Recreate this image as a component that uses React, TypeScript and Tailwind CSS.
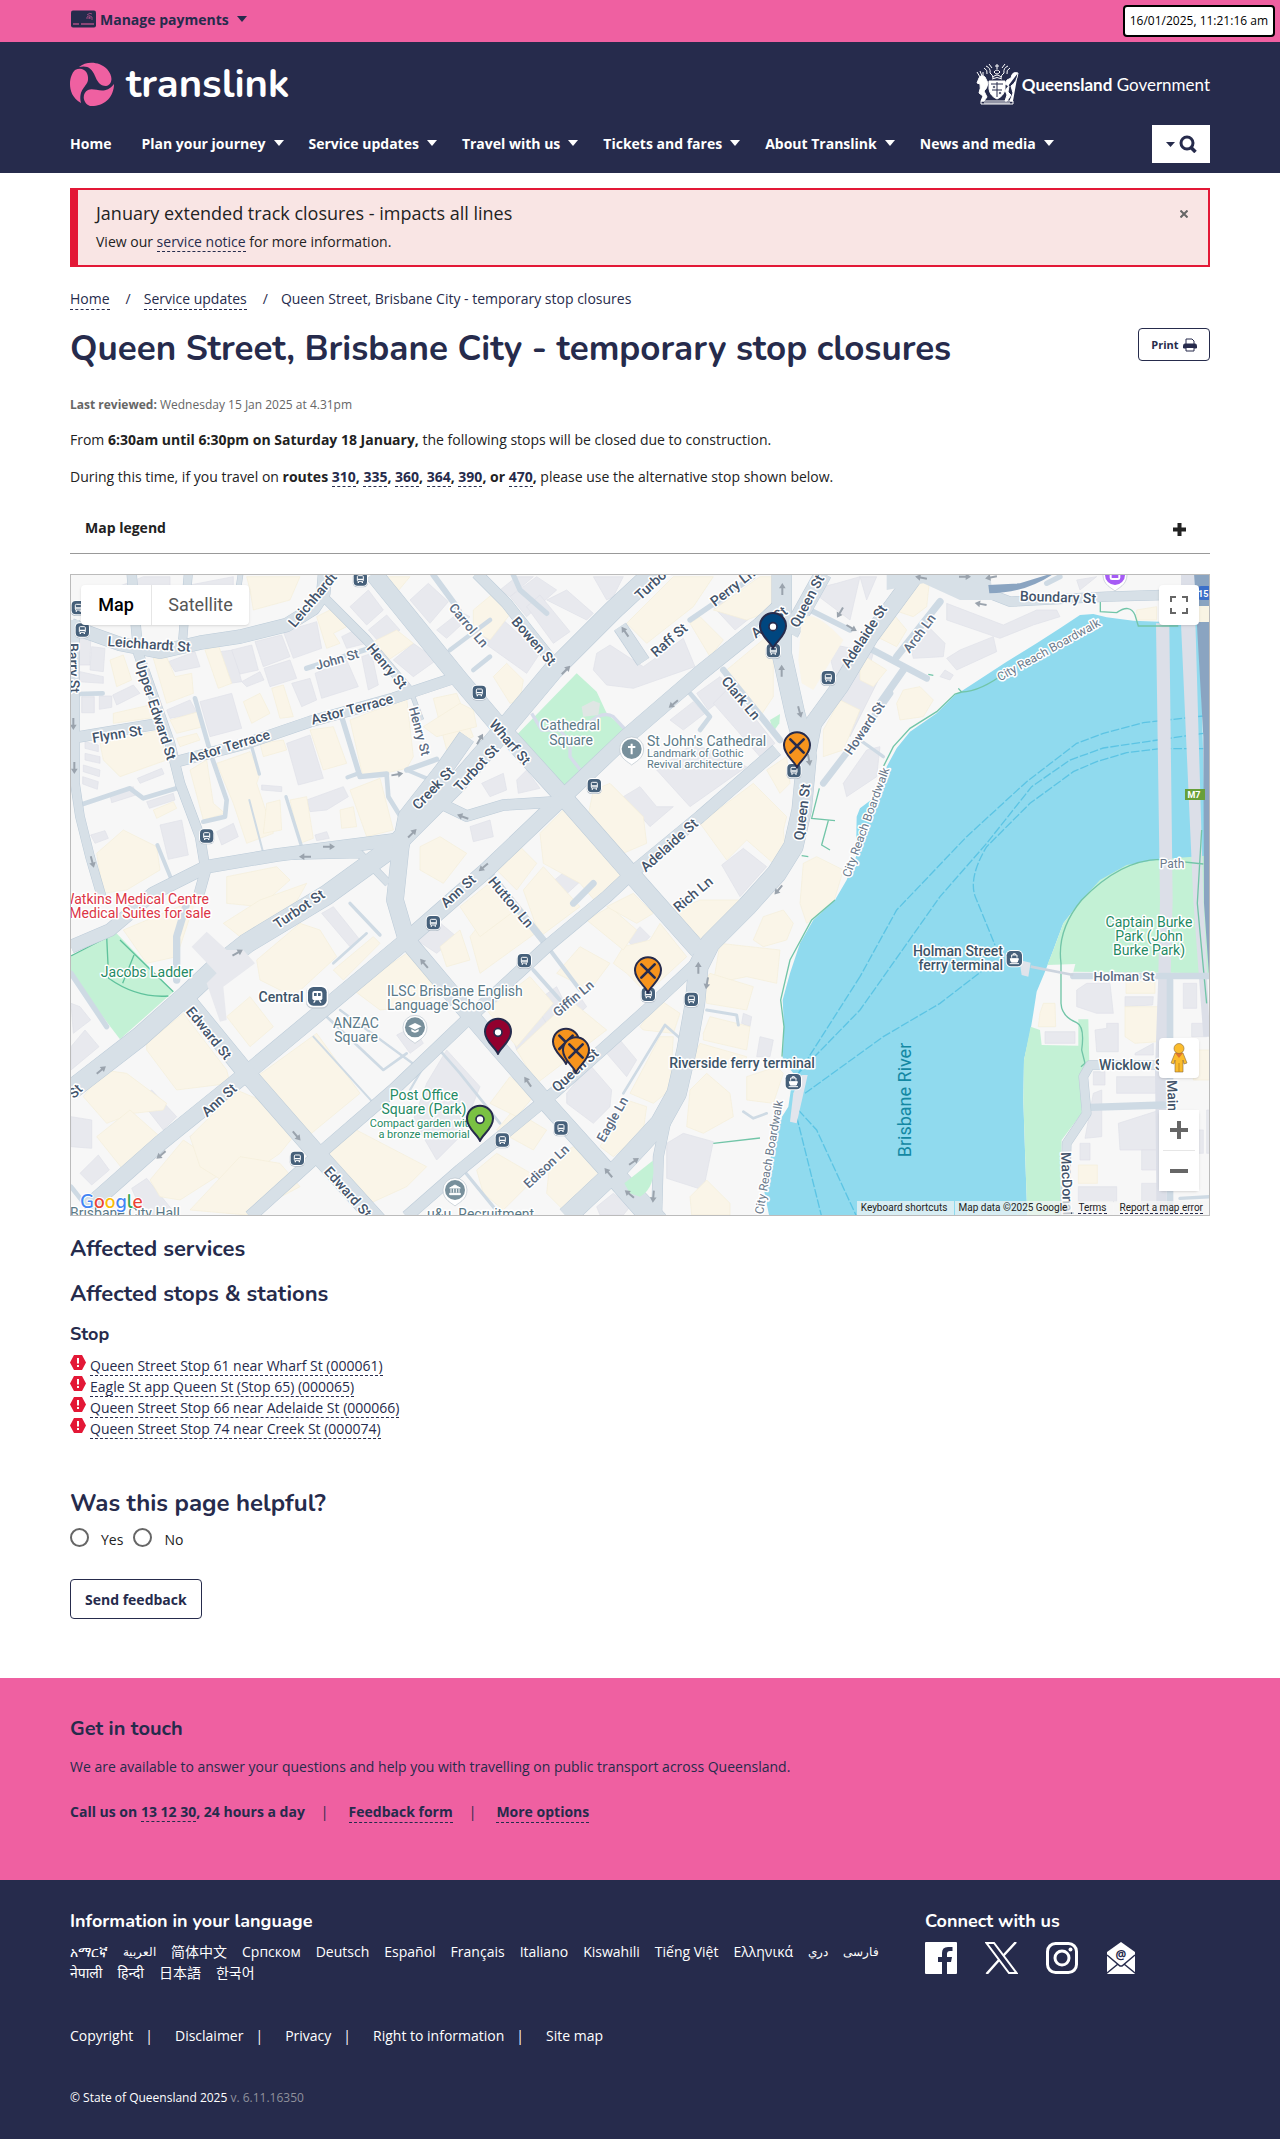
import React from "react";

const NAV = ["Plan your journey", "Service updates", "Travel with us", "Tickets and fares", "About Translink", "News and media"];
const ROUTES = ["310", "335", "360", "364", "390"];
const STOPS = [
  "Queen Street Stop 61 near Wharf St (000061)",
  "Eagle St app Queen St (Stop 65) (000065)",
  "Queen Street Stop 66 near Adelaide St (000066)",
  "Queen Street Stop 74 near Creek St (000074)",
];
const LANGS = ["አማርኛ", "العربية", "简体中文", "Српском", "Deutsch", "Español", "Français", "Italiano", "Kiswahili", "Tiếng Việt", "Ελληνικά", "دري", "فارسی", "नेपाली", "हिन्दी", "日本語", "한국어"];
const RTL = ["العربية", "دري", "فارسی"];
const LEGAL = ["Copyright", "Disclaimer", "Privacy", "Right to information", "Site map"];

const LINK = "border-b border-dashed border-[#262b4c] text-[#262b4c]";
const HEAD = "font-[Nunito,Lato,sans-serif] font-bold text-[#262b4c]";

function Caret({ className }: { className: string }) {
  return (
    <svg className={className} viewBox="0 0 10 6" preserveAspectRatio="none" aria-hidden="true">
      <path d="M0 0h10L5 6z" fill="currentColor" />
    </svg>
  );
}

/* ---------- Map drawing (geometry is on a grid three times finer than the labels) ---------- */

const GREY: string[] = [
  "150,60 250,20 330,20 330,60", "390,45 520,20 520,95 400,60", "38,200 92,210 90,285 38,285", "95,230 135,235 130,305 90,300", "60,305 130,320 130,340 55,335",
  "158,375 220,345 240,370 170,405", "65,380 103,380 103,428 65,428", "118,378 155,378 155,412 118,418", "325,275 405,245 420,290 345,305", "320,420 390,390 412,430 330,445",
  "420,395 515,370 545,475 450,500", "480,245 520,240 545,335 510,340", "515,240 575,225 595,300 540,312", "585,215 665,195 690,260 610,290", "670,185 770,155 785,235 700,265",
  "545,335 600,305 612,330 560,350", "612,295 690,270 710,325 630,350", "765,310 860,270 895,350 785,385", "695,340 750,325 770,390 725,410", "845,200 895,175 920,220 860,235",
  "905,260 935,250 955,345 925,360", "925,180 980,135 1020,180 965,225", "1000,270 1060,220 1130,270 1060,320", "870,110 925,60 970,120 920,165", "1050,90 1105,40 1165,95 1110,160",
  "1130,180 1200,125 1230,140 1160,205", "680,520 750,495 790,625 715,645", "740,690 850,650 865,680 800,720 750,725", "765,795 800,785 808,805 770,812", "605,645 665,650 665,665 605,660",
  "75,515 115,525 115,545 75,535", "75,550 120,560 120,580 75,570", "70,585 120,600 118,620 70,605", "68,620 115,635 112,658 68,642", "232,625 305,595 312,612 240,640",
  "150,675 220,650 228,675 155,698", "260,695 340,670 345,690 268,715", "92,795 135,782 145,805 105,820", "300,765 365,750 385,855 325,868", "470,785 520,760 535,800 485,825",
  "1350,80 1430,20 1490,60 1400,140", "1400,110 1440,75 1530,185 1480,220", "1460,90 1520,60 1600,130 1580,150", "1320,60 1370,20 1420,20 1350,80", "1260,210 1330,150 1440,250 1400,310",
  "1600,20 1690,20 1660,80 1640,90", "1600,300 1610,250 1650,225 1750,290 1870,205 1905,290 1720,355 1640,345", "1960,110 2000,80 2075,140 2025,180", "1910,370 1980,320 2020,360 1945,420", "1830,450 1900,395 1935,430 1870,480",
  "1960,400 2010,350 2145,520 2100,560", "1790,600 1900,520 2060,590 1890,710", "1690,680 1740,650 1790,710 1840,710 1770,770", "1265,640 1330,610 1340,660 1290,680", "1370,630 1400,600 1440,655 1375,670",
  "1230,770 1290,750 1300,800 1240,815", "1460,950 1520,900 1560,935 1500,990", "1985,885 2050,835 2120,890 2040,980", "2250,60 2330,40 2400,20 2370,150", "2330,350 2400,200 2440,250 2390,420",
  "2300,220 2400,240 2460,320 2370,500", "2660,100 2830,165 2930,120 2990,120 3000,140 2920,165 2820,205 2660,150", "2550,220 2610,175 2655,220 2650,260 2560,265", "2660,265 2700,240 2800,200 2810,245 2690,300", "2640,320 2655,300 2680,315 2670,330",
  "2350,640 2420,540 2460,530 2450,620 2360,680", "2400,20 2450,20 2420,90", "3050,30 3110,20 3060,60",
  "785,1030 820,1010 900,1110 870,1130", "1070,1110 1130,1050 1190,1100 1130,1150", "33,1300 60,1310 92,1350 40,1390", "33,1430 75,1380 117,1430 33,1500",
  "33,1640 95,1650 95,1735 33,1730", "240,1590 275,1560 350,1640 310,1680", "60,1810 115,1755 148,1800 95,1845", "215,1855 260,1825 345,1930 250,1935", "390,1700 430,1670 500,1760 480,1800",
  "1010,1395 1060,1370 1090,1420 1050,1450", "1100,1540 1160,1440 1260,1550 1200,1700 1130,1770 1060,1650", "1360,1410 1440,1330 1470,1360 1370,1440", "1420,1300 1490,1250 1510,1290 1560,1280 1580,1310 1490,1390 1460,1360",
  "1520,1570 1590,1485 1655,1560 1650,1610 1600,1660 1520,1600", "1640,1450 1680,1410 1730,1470 1700,1520", "1700,1110 1740,1070 1770,1100 1730,1140", "1820,1825 1820,1720 1870,1690 1960,1715 1930,1860", "1610,1910 1660,1870 1710,1910 1690,1935 1620,1935",
  "2090,1460 2100,1400 2140,1410 2130,1460", "2050,1330 2075,1340 2070,1370 2045,1360", "3050,1260 3080,1240 3150,1240 3160,1330 3110,1330 3050,1310", "3195,1280 3280,1280 3278,1305 3195,1310", "2955,1385 3045,1385 3045,1420 2955,1420",
  "3105,1380 3140,1375 3140,1360 3175,1360 3175,1445 3110,1445", "3100,1505 3135,1505 3135,1545 3100,1545", "3170,1520 3290,1520 3290,1570 3170,1570", "3175,1660 3300,1620 3300,1740 3180,1740", "3100,1570 3125,1560 3125,1700 3075,1705",
  "3060,1720 3090,1720 3090,1770 3060,1770", "3245,1740 3290,1740 3290,1800 3245,1800", "3245,1840 3290,1840 3290,1935 3245,1935", "3055,1850 3170,1850 3170,1895 3055,1895", "3370,1240 3410,1240 3410,1315 3370,1315",
  "3395,1360 3440,1360 3440,1400 3395,1400", "3395,1680 3430,1680 3430,1750 3395,1750", "3440,1620 3460,1620 3460,1750 3440,1750", "3225,1450 3280,1420 3280,1455 3225,1455",
];

const CREAM: string[] = [
  "560,20 720,20 690,90 580,120 570,60", "150,270 190,255 215,330 170,350", "280,265 315,250 345,320 395,310 400,370 320,400", "435,240 475,225 515,340 475,355", "550,395 600,370 630,430 575,460",
  "635,355 670,345 700,440 660,445", "770,140 820,115 860,170 820,190 840,220 800,235", "160,430 270,405 300,440 160,460", "120,520 300,480 320,570 180,620 130,570", "330,450 415,425 430,470 350,490",
  "350,505 410,490 420,510 360,530", "870,450 1040,385 1060,560 1040,595 910,625", "1120,385 1190,370 1240,500 1160,540", "600,520 670,510 680,540 610,560", "750,480 820,470 860,580 790,600",
  "390,600 440,570 460,700 495,730 430,750", "470,580 570,545 600,610 590,640 640,790 560,820 520,700", "620,700 660,690 665,780 610,790", "690,690 740,680 760,805 720,820", "870,660 960,625 1000,780 920,800",
  "840,720 880,710 890,770 845,775", "110,850 190,780 290,830 300,900 200,960 130,970", "280,720 340,695 350,715 290,745", "500,920 650,890 690,930 600,1010 500,1000", "1080,830 1140,800 1220,850 1150,940 1080,900",
  "960,20 1050,20 1000,80", "930,220 1010,180 1060,220 970,280", "1240,120 1300,70 1360,120 1290,210 1240,180", "1300,320 1340,280 1390,330 1380,390 1350,400", "1090,470 1130,500 1250,470 1240,420 1200,400",
  "1700,160 1840,20 1960,20 1900,110 1760,220", "1890,160 1920,140 1990,210 1950,260", "1960,120 2100,20 2140,20 2140,120 2060,150", "2000,300 2120,200 2140,250 2140,380 2100,440 2060,370",
  "2290,480 2340,390 2400,420 2350,540 2290,560", "2120,600 2180,560 2190,640 2160,670", "1920,760 2080,640 2180,740 2170,780 2180,890 2140,880 2060,810 2000,870", "2230,880 2270,860 2350,900 2320,1000 2240,1060 2220,1000",
  "1580,760 1600,660 1650,640 1750,740 1760,820 1690,850 1640,800", "1440,790 1510,720 1720,930 1620,1010 1560,940 1450,880", "1300,890 1370,820 1430,880 1370,960", "1390,960 1450,890 1560,1010 1440,1100",
  "2500,80 2540,20 2610,20 2600,110 2560,140 2500,120", "2450,200 2490,120 2540,180 2510,230", "2400,250 2480,300 2440,350 2400,330", "2510,400 2530,360 2580,350 2620,390 2590,440 2520,450",
  "3230,120 3290,110 3290,150 3230,150", "3380,110 3450,110 3450,155 3380,155", "190,1080 380,1000 400,1010 350,1160 260,1180", "490,1060 600,990 740,940 690,1030 600,1100 540,1100", "590,1170 720,1060 780,1080 830,1160 700,1280 600,1230",
  "820,1200 940,1100 960,1120 850,1230", "500,1340 570,1280 640,1370 570,1430", "590,1520 770,1390 900,1570 730,1710", "260,1420 370,1330 500,1500 510,1540 350,1560 260,1440", "70,1580 130,1500 200,1510 320,1600 310,1620 220,1630 140,1660",
  "110,1700 210,1620 300,1700 190,1800", "270,1830 370,1710 430,1750 470,1820 360,1890 300,1880", "390,1700 530,1560 600,1590 700,1700 660,1750 560,1820 500,1840 420,1790", "390,1920 540,1760 660,1780 720,1850 560,1935", "800,1750 870,1670 1100,1790 1040,1850 930,1900 870,1850",
  "880,1260 1040,1150 1140,1270 1060,1310 960,1320", "1140,1130 1200,1080 1230,1170 1160,1190", "1230,1100 1340,960 1440,1080 1260,1210", "1200,1010 1300,930 1380,1010 1260,1100", "1280,1320 1410,1220 1480,1300 1370,1430",
  "1370,1440 1530,1290 1640,1380 1430,1540", "1490,1210 1560,1130 1650,1180 1590,1260", "1660,1180 1690,1130 1770,1110 1800,1060 1880,1160 1760,1270 1700,1210", "1580,1050 1650,1010 1730,1080 1690,1140", "1640,1010 1720,970 1780,1030 1730,1060",
  "1830,1030 1920,990 2070,990 1930,1110", "1710,1570 1800,1400 1840,1400 1830,1560 1780,1600", "1740,1370 1800,1290 1860,1330 1840,1390 1750,1380", "1620,1730 1700,1590 1760,1610 1750,1680 1660,1760", "1470,1770 1540,1730 1620,1810 1510,1920 1460,1870",
  "1310,1680 1360,1620 1460,1680 1420,1740", "1290,1600 1350,1520 1420,1580 1370,1640", "1250,1800 1310,1750 1430,1820 1330,1920 1270,1870", "1960,1240 1980,1120 2160,1140 2150,1240 2060,1220", "1930,1240 1950,1210 2080,1250 2060,1320 1940,1300",
  "1930,1390 1950,1340 2070,1370 2060,1440 1930,1410", "1880,1500 1920,1420 2060,1460 2050,1490", "2080,1110 2110,1040 2170,1020 2200,1060 2180,1110 2110,1130", "1880,1670 1890,1560 1940,1510 2010,1570 2020,1640 1930,1690", "2060,1520 2150,1490 2170,1510 2140,1600 2060,1590",
  "1895,1935 1890,1880 1940,1830 2010,1900 2010,1935", "2940,1330 2950,1300 2985,1300 2987,1370 2935,1370", "3195,1310 3295,1310 3295,1415 3225,1420 3195,1400", "3198,1235 3285,1235 3285,1270 3198,1270", "3055,1785 3112,1785 3112,1840 3055,1840", "3400,1440 3450,1440 3450,1530 3400,1530",
];

const LANES: [string, number][] = [
  ["50,372 128,370", 14], ["60,705 210,655 250,685 350,655", 14], ["405,385 455,560 500,690 495,740 430,755", 14], ["845,440 900,620 980,612", 16],
  ["980,615 985,680 1022,740", 14], ["1040,600 1130,568", 16], ["1040,600 1100,625", 12], ["575,530 598,612", 10], ["568,690 610,850", 6], ["678,680 725,830", 10], ["292,825 335,930", 12],
  ["740,295 920,238", 16], ["862,622 890,612", 12], ["1120,15 1190,110 1200,130", 18], ["1170,240 1290,150", 14], ["1360,15 1380,60 1460,130", 16], ["1240,300 1290,260", 14],
  ["1890,150 2080,20", 16], ["1890,370 1950,440 1920,480", 14], ["1990,300 2160,510", 20], ["2290,640 2420,470 2490,370", 20], ["2640,95 2510,260", 22],
  ["2410,225 2600,325", 20], ["2530,300 2460,400", 22], ["2250,120 2370,180", 16], ["2400,510 2470,560", 10], ["380,1000 350,1100 350,1230", 22], ["33,1210 140,1370", 16], ["33,1850 100,1935", 14],
  ["870,1000 960,1095", 10], ["820,1180 920,1090", 8], ["760,1400 950,1610", 6], ["800,1340 970,1500 1040,1450", 8], ["840,1320 1085,1500 1050,1560", 7], ["1130,1430 1200,1510 1320,1660", 8],
  ["1280,900 1465,1130", 22], ["1470,1140 1560,1260", 12], ["1420,1200 1500,1290", 12], ["1690,1570 1815,1365 1860,1405", 8], ["1210,1800 1320,1935", 10], ["1940,1320 2030,1335 2035,1365", 9],
  ["2050,1625 2080,1645 2120,1630", 8], ["3040,1218 3450,1218", 20], ["3330,1230 3330,1935", 20], ["3090,1612 3310,1605", 22], ["2960,40 3000,20", 16], ["3360,1885 3450,1880", 10], ["1540,1000 1600,940", 20],
];

const STREETS: [string, number][] = [
  ["33,165 90,190 180,222 300,245 420,218 540,200 680,165 760,115 790,70 795,10", 40],
  ["215,10 225,140 235,250 330,520 360,640 420,800 435,890", 28], ["385,10 368,210", 24], ["542,10 530,90", 14],
  ["50,502 290,462", 32], ["45,150 45,400 45,640 60,740 90,860 125,980", 26], ["350,575 560,520 750,455 1000,385 1180,325", 32],
  ["790,80 920,210 1055,370", 26], ["1055,370 1085,450", 12], ["33,1130 150,1080 280,970 440,890 650,855 1000,810", 38], ["440,890 415,980", 30], ["650,858 900,852 985,940", 22],
  ["940,10 1200,330 1310,460 1505,675 1720,920 1915,1140", 52], ["33,1560 240,1400 380,1275 460,1200 560,1120 800,975 1000,830 1200,630 1300,515 1480,300 1660,120 1800,-10", 58],
  ["1220,500 1150,600 1040,740 1022,830 1005,990 1040,1110 1200,1300 1320,1440 1460,1600 1640,1800 1780,1960", 50],
  ["80,1915 300,1720 560,1510 800,1310 1040,1110 1280,900 1500,690 1700,500 1920,310 2100,165 2170,100", 46],
  ["2165,10 2165,250 2205,430 2240,560 2225,720 2200,830 2150,910 2060,1010 1950,1120 1915,1190 1905,1300 1880,1440 1850,1570 1800,1660 1680,1790 1520,1940", 58],
  ["2190,190 2290,10", 50], ["2570,10 2430,200 2340,350 2260,460 2240,560", 50], ["2150,540 1920,740 1720,905 1640,980 1460,1130 1220,1350 1000,1560 780,1750 570,1940", 36],
  ["380,1290 560,1510 770,1750 960,1960", 52], ["1910,1180 1760,1320 1480,1570 1200,1800 1040,1940", 34], ["1820,1640 1795,1760 1790,1940", 30], ["1660,1800 1800,1950", 46],
  ["1680,170 1750,275", 40], ["1250,10 1340,100 1490,290", 32], ["1100,680 1220,738 1330,705 1500,695", 32], ["2700,30 2760,60 2850,95 3140,80 3310,75", 28],
  ["3310,1485 3090,1485 3070,1520 3080,1630 3020,1720 3015,1935", 26],
];

const BUS: [number, number][] = [[901, 27], [55, 113], [67, 180], [440, 798], [1258, 367], [1603, 647], [2305, 323], [2140, 242], [2202, 602], [1120, 1058], [712, 1765], [1393, 1172], [1765, 1273], [1894, 1288], [1503, 1674], [1327, 1710]];
const ARROWS: [number, number, number][] = [[40, 462, 90], [43, 594, 90], [97, 876, 75], [735, 860, 180], [807, 830, 0], [1012, 613, -10], [1057, 790, -45], [1260, 507, -60], [1208, 740, 200], [1518, 300, -45], [1695, 185, 235], [1840, 402, 140], [2167, 57, -90], [2165, 302, -90], [2219, 426, 75], [2247, 570, 80], [2155, 960, 130], [2340, 128, 120], [2375, 174, 30], [2583, 23, 190], [2715, 20, 0], [2793, 22, 170], [2762, 102, 190], [1270, 892, 140], [533, 1148, -30], [124, 1500, -40], [303, 1755, 140], [710, 1698, 50], [1092, 1180, 230], [1403, 1535, 235], [1915, 1193, -90], [1941, 1240, 100], [1722, 1774, -35], [1645, 1808, 230], [1708, 1872, 220], [1780, 1880, 95]];

type Kind = "road" | "lane" | "path" | "poi" | "park" | "tiny" | "parkTiny" | "red" | "stop" | "river";
const STYLE: Record<Kind, string> = {
  road: "fill-[#43546b] text-[14px] font-medium stroke-white stroke-[3px]",
  lane: "fill-[#5a6b82] text-[13px] font-medium stroke-white stroke-[3px]",
  path: "fill-[#6b7a8c] text-[12px] stroke-white stroke-[3px]",
  poi: "fill-[#5b7a88] text-[14px] stroke-white stroke-[3px]",
  park: "fill-[#1f8a64] text-[14px] stroke-white stroke-[3px]",
  tiny: "fill-[#5b7a88] text-[11px] stroke-white stroke-[3px]",
  parkTiny: "fill-[#1f8a64] text-[11px] stroke-white stroke-[3px]",
  red: "fill-[#dc3545] text-[14px] stroke-white stroke-[3px]",
  stop: "fill-[#3d5468] text-[14px] font-medium stroke-white stroke-[3px]",
  river: "fill-[#1388a3] text-[18px]",
};
const LABELS: [string, number, number, number, Kind, ("start" | "end")?][] = [
  ["Leichhardt St", 149, 644, 4, "road"], ["Leichhardt St", 291, 625, -50, "road", "start"], ["Barry St", 74, 668, 88, "road"], ["Upper Edward St", 156, 710, 72, "road"],
  ["Flynn St", 117, 734, -9, "road"], ["Astor Terrace", 229, 746, -17, "road"], ["Astor Terrace", 352, 709, -15, "road"], ["John St", 337, 659, -16, "lane"],
  ["Henry St", 387, 666, 50, "road"], ["Henry St", 420, 731, 75, "lane"], ["Creek St", 433, 788, -46, "road"], ["Turbot St", 476, 768, -47, "road"], ["Turbot St", 299, 909, -34, "road"],
  ["Carrol Ln", 469, 625, 50, "lane"], ["Bowen St", 534, 641, 49, "road"], ["Wharf St", 510, 742, 49, "road"], ["Turbot St", 637, 597, -42, "road", "start"], ["Perry Ln", 712, 603, -38, "road", "start"],
  ["Raff St", 669, 640, -41, "road"], ["Queen St", 807, 601, -62, "road"], ["Queen St", 802, 812, -83, "road"], ["Ann St", 769, 622, -38, "road"], ["Adelaide St", 864, 636, -57, "road"],
  ["Clark Ln", 741, 698, 50, "road"], ["Cathedral", 570, 725, 0, "poi"], ["Square", 571, 740, 0, "poi"], ["St John's Cathedral", 647, 741, 0, "poi", "start"], ["Landmark of Gothic", 647, 752, 0, "tiny", "start"],
  ["Revival architecture", 647, 763, 0, "tiny", "start"], ["Howard St", 864, 728, -56, "lane"], ["Arch Ln", 919, 633, -53, "lane"], ["Boundary St", 1058, 597, 2, "road"],
  ["City Reach Boardwalk", 1048, 649, -29, "path"], ["City Reach Boardwalk", 865, 822, -70, "path"], ["City Reach Boardwalk", 768, 1157, -80, "path"], ["Hutton Ln", 511, 902, 50, "road"],
  ["Ann St", 458, 891, -42, "road"], ["Rich Ln", 693, 894, -40, "road"], ["Adelaide St", 669, 845, -42, "road"], ["Watkins Medical Centre", 209, 899, 0, "red", "end"], ["Medical Suites for sale", 211, 913, 0, "red", "end"],
  ["Jacobs Ladder", 147, 972, 0, "park"], ["Edward St", 209, 1033, 51, "road"], ["Edward St", 348, 1192, 48, "road"], ["Ann St", 219, 1100, -42, "road"], ["Central", 281, 997, 0, "stop"],
  ["ANZAC", 356, 1023, 0, "poi"], ["Square", 356, 1037, 0, "poi"], ["ILSC Brisbane English", 387, 991, 0, "poi", "start"], ["Language School", 387, 1005, 0, "poi", "start"],
  ["Post Office", 424, 1095, 0, "park"], ["Square (Park)", 424, 1109, 0, "park"], ["Compact garden with", 422, 1122, 0, "parkTiny"], ["a bronze memorial", 424, 1133, 0, "parkTiny"],
  ["St", 75, 1091, -45, "road"], ["Giffin Ln", 573, 998, -40, "lane"], ["Queen St", 575, 1070, -42, "road"], ["Eagle Ln", 612, 1119, -60, "lane"], ["Edison Ln", 546, 1166, -43, "lane"],
  ["Riverside ferry terminal", 742, 1063, 0, "stop"], ["Holman Street", 1003, 951, 0, "stop", "end"], ["ferry terminal", 1003, 965, 0, "stop", "end"], ["Brisbane River", 906, 1100, -90, "river"],
  ["Captain Burke", 1149, 922, 0, "park"], ["Park (John", 1149, 936, 0, "park"], ["Burke Park)", 1149, 950, 0, "park"], ["Path", 1172, 863, 0, "path"], ["Holman St", 1124, 976, 0, "lane"],
  ["Wicklow St", 1099, 1065, 0, "stop", "start"], ["Main St", 1172, 1080, 88, "road", "start"], ["MacDonald St", 1066, 1152, 88, "road", "start"], ["Brisbane City Hall", 70, 1213, 0, "poi", "start"], ["u&u. Recruitment", 427, 1214, 0, "poi", "start"],
];

const PINS: [number, number, string, "dot" | "cross"][] = [
  [2139, 170, "#00467f", "dot"], [2211, 528, "#f7941d", "cross"], [1764, 1203, "#f7941d", "cross"], [1518, 1417, "#f7941d", "cross"], [1548, 1443, "#f7941d", "cross"], [1314, 1387, "#92002e", "dot"], [1260, 1648, "#7ac143", "dot"],
];

function PoiBadge({ x, y, color, children }: { x: number; y: number; color: string; children: React.ReactNode }) {
  return (
    <g transform={`translate(${x} ${y})`}>
      <path d="M0 48C-8 40-36 30-36 0A36 36 0 1 1 36 0C36 30 8 40 0 48z" fill="#fff" stroke="#b8c2cc" strokeWidth="2" />
      <circle r="30" fill={color} />
      {children}
    </g>
  );
}

function MapDrawing() {
  return (
    <svg className="block h-full w-full font-[Roboto,sans-serif]" viewBox="71 575 1138 640" preserveAspectRatio="xMidYMid slice" role="img" aria-label="Map of Queen Street, Brisbane City">
      <g transform="translate(60 570) scale(.33333)">
        <rect x="0" y="0" width="3500" height="2000" fill="#f7f7f7" />
        {GREY.map((p) => <polygon key={p} points={p} fill="#e8e9ee" stroke="#dfe1e8" strokeWidth="2" />)}
        {CREAM.map((p) => <polygon key={p} points={p} fill="#faf5e8" stroke="#f4eeda" strokeWidth="2" />)}
        <path d="M1550 310L1610 365 1640 430 1697 480 1510 650 1370 495z" fill="#c3f1d5" />
        <path d="M1415 430L1445 480 1500 480 1530 520 1530 560 1565 605M1585 460Q1630 420 1660 440L1697 480" fill="none" stroke="#d6dcea" strokeWidth="10" />
        <path d="M1565 410L1600 392 1620 400 1615 435 1570 440z" fill="#dfe6e4" />
        <path d="M33 1160L165 1085 340 1265 180 1408 33 1215z" fill="#c3f1d5" />
        <path d="M33 1158L160 1092M140 1100L146 1225Q230 1285 325 1278M222 1155L188 1240M180 1110L340 1265" fill="none" stroke="#5fc29c" strokeWidth="4" />
        <path d="M2130 450L2160 432 2158 460 2140 485z" fill="#c3f1d5" />
        <path d="M3060 135L3100 132 3140 142 3220 152 3420 160 3440 990 3065 990 3010 1060 2980 1140 2955 1205 2930 1265 2920 1330 2910 1390 2892 1470 2890 1590 2895 1740 2902 1940 2128 1940 2112 1860 2120 1810 2140 1730 2160 1650 2185 1610 2200 1510 2168 1470 2172 1370 2168 1290 2190 1210 2220 1120 2260 1050 2325 990 2360 930 2388 860 2390 740 2400 715 2460 670 2475 640 2480 590 2510 535 2550 485 2630 430 2685 375 2710 360 2840 275 2930 220 3000 175z" fill="#90daee" />
        <path d="M3430 438L3250 458 3130 490 3050 520 2900 635 2720 800 2510 1020 2400 1220M3430 490L3130 534 3030 570 2915 650 2780 820 2640 980 2400 1320M3430 536L3300 536 3200 548 3110 575 3040 605 2910 700 2780 830Q2720 930 2750 990L2805 1125M2235 1570L2470 1400 2640 1300 2770 1200M2215 1510L2400 1220M2215 1510L2400 1320M2210 1640L2285 1940M2215 1620L2270 1680 2390 1940" fill="none" stroke="#5cc4e4" strokeWidth="4" strokeDasharray="26 6" />
        <path d="M2225 1515L2243 1515 2210 1660 2190 1655 2200 1570z" fill="#e2e5ec" />
        <path d="M3065 990L3120 930 3200 885 3300 868 3450 856 3450 1210 3040 1205 3046 1182 2962 1185 2980 1140 3010 1060z" fill="#c3f1d5" />
        <path d="M2912 1370L2940 1380 2945 1425 3055 1427 3055 1348 3085 1348 3088 1480 3065 1500 3065 1630 3005 1710 3000 1940 2902 1940 2895 1740 2890 1590 2892 1470z" fill="#c3f1d5" />
        <path d="M3288 160L3328 160 3338 990 3332 1215 3320 1600 3320 1940 3290 1940 3285 1500 3295 1215 3300 990zM3363 10L3402 10 3430 990 3450 1400 3430 1400 3400 990 3363 160z" fill="#dcdfe8" />
        <path d="M3402 10L3455 10 3455 1330 3432 1000 3430 500z" fill="#8aa4c1" />
        <rect x="3380" y="108" width="75" height="48" fill="#f9f4e4" />
        <path d="M2605 313L2620 316M2695 355L2705 366Q2760 365 2840 305M2705 366L2685 372 2630 425 2550 475 2500 530 2470 590M2278 655L2255 745 2325 752M2305 752L2285 825 2310 840M2225 857L2245 860M3121 90L3121 125 3170 128Q3210 100 3225 135L3235 168 3355 168M3065 990Q3180 870 3300 868L3430 882M3065 990Q2990 1080 3003 1180L3003 1300Q3005 1340 3050 1358 3075 1370 3065 1440L3075 1480 3063 1490M3425 780L3412 1000 3440 1300M2325 990L2255 1050 2190 1170 2162 1290 2172 1370 2166 1460M1960 1720L2100 1704" fill="none" stroke="#72c5a8" strokeWidth="4" />
        {LANES.map(([p, w]) => <polyline key={p} points={p} fill="none" stroke="#cedae4" strokeWidth={w} strokeLinejoin="round" strokeLinecap="round" />)}
        {STREETS.map(([p, w]) => <polyline key={p} points={p} fill="none" stroke="#bccbd8" strokeWidth={w + 3} strokeLinejoin="round" />)}
        <path d="M2480 10L2790 10 2800 90 2700 90 2590 40 2480 60z" fill="#d7e0e7" />
        {STREETS.map(([p, w]) => <polyline key={p} points={p} fill="none" stroke="#d7e0e7" strokeWidth={w} strokeLinejoin="round" />)}
        <path d="M2215 270L2225 150Q2250 115 2320 180L2350 210 2260 360 2225 340z" fill="#faf5e8" />
        <path d="M2785 45L2880 40 2970 12 2880 5 2990 5Q2900 70 2788 70z" fill="#8aa4c1" />
        <path d="M1693 1840L1778 1772Q1790 1850 1740 1880L1710 1870z" fill="#c3f1d5" />
        <path d="M395 1130L440 1085 500 1140 550 1140 585 1180 490 1250 500 1350 480 1355 440 1240 470 1210z" fill="#e8e9ee" />
        <path d="M2878 1170L2912 1178 2905 1220 2885 1215z" fill="#dfe3ea" />
        <path d="M2912 1190L3040 1215" stroke="#ccd4de" strokeWidth="8" />
        {ARROWS.map(([x, y, r]) => (
          <path key={`${x}-${y}`} transform={`translate(${x} ${y}) rotate(${r})`} d="M-18-3H2V-10L18 0 2 10V3H-18z" fill="#9aa3ad" />
        ))}
        {BUS.map(([x, y]) => (
          <g key={`${x}-${y}`} transform={`translate(${x} ${y})`}>
            <rect x="-23" y="-19" width="46" height="44" rx="14" fill="#b5bfca" />
            <rect x="-23" y="-23" width="46" height="46" rx="15" fill="#fff" />
            <rect x="-20" y="-20" width="40" height="40" rx="12" fill="#46607a" />
            <rect x="-9" y="-10" width="18" height="17" rx="3" fill="none" stroke="#fff" strokeWidth="3" />
            <path d="M-8 1H8M-6 8V12M6 8V12" stroke="#fff" strokeWidth="4" />
          </g>
        ))}
        <g transform="translate(772 1280)">
          <rect x="-34" y="-32" width="68" height="68" rx="20" fill="#c3cbd4" />
          <rect x="-33" y="-34" width="66" height="66" rx="20" fill="#fff" />
          <rect x="-28" y="-29" width="56" height="56" rx="16" fill="#46607a" />
          <rect x="-15" y="-17" width="30" height="28" rx="6" fill="#fff" />
          <path d="M-10-11H-2V-2H-10zM2-11H10V-2H2z" fill="#46607a" />
          <path d="M-11 18L-6 11M11 18L6 11" stroke="#fff" strokeWidth="4" />
        </g>
        {[[2200, 1535], [2863, 1166]].map(([x, y]) => (
          <g key={x} transform={`translate(${x} ${y})`}>
            <rect x="-26" y="-26" width="52" height="52" rx="16" fill="#fff" />
            <rect x="-23" y="-23" width="46" height="46" rx="13" fill="#46607a" />
            <path d="M-12 0H12L9 10H-9zM-8-3V-11H8V-3M-3-11V-15H3V-11" fill="none" stroke="#fff" strokeWidth="3" />
            <path d="M-13 0H13L9 11H-9z" fill="#fff" />
            <path d="M-14 15H14" stroke="#fff" strokeWidth="3" />
          </g>
        ))}
        <PoiBadge x={1715} y={537} color="#78909c"><path d="M0-16V16M-11-6H11" stroke="#fff" strokeWidth="6" /></PoiBadge>
        <PoiBadge x={1065} y={1372} color="#78909c"><path d="M-20-3L0-13 20-3 0 7zM-11 5V12Q0 20 11 12V5L0 11z" fill="#fff" /></PoiBadge>
        <PoiBadge x={1185} y={1860} color="#78909c"><path d="M-16-6L0-15 16-6zM-16 10H16V14H-16zM-12-4V8M-4-4V8M4-4V8M12-4V8" fill="#fff" stroke="#fff" strokeWidth="3" /></PoiBadge>
        <PoiBadge x={3165} y={15} color="#a55bf5"><rect x="-13" y="-12" width="26" height="24" rx="4" fill="none" stroke="#fff" strokeWidth="6" /></PoiBadge>
        <rect x="3375" y="657" width="60" height="33" fill="#689f38" />
        <rect x="3412" y="48" width="50" height="42" rx="12" fill="#3b6fc9" />
      </g>
      <g strokeLinejoin="round">
        {LABELS.map(([text, x, y, r, kind, anchor], i) => (
          <text key={i} className={STYLE[kind]} transform={`translate(${x} ${y}) rotate(${r})`} dy="5" textAnchor={anchor ?? "middle"} paintOrder="stroke">
            {text}
          </text>
        ))}
        <text x="1194" y="798" textAnchor="middle" className="fill-white text-[9px] font-bold">M7</text>
        <text x="1198" y="597" className="fill-white text-[9px] font-bold">15</text>
        <text x="80" y="1208" className="font-[Nunito,Lato,sans-serif] text-[19px] font-semibold stroke-white stroke-2" paintOrder="stroke">
          <tspan fill="#4285f4">G</tspan><tspan fill="#ea4335">o</tspan><tspan fill="#fbbc04">o</tspan><tspan fill="#4285f4">g</tspan><tspan fill="#34a853">l</tspan><tspan fill="#ea4335">e</tspan>
        </text>
      </g>
      <g transform="translate(60 570) scale(.33333)">
        {PINS.map(([x, y, color, mark]) => (
          <g key={x} transform={`translate(${x} ${y})`}>
            <path d="M0 65C-6 46-39 28-39-2A39 39 0 0 1 39-2C39 28 6 46 0 65z" fill={color} stroke="#262b4c" strokeWidth="6" strokeLinejoin="round" />
            {mark === "dot"
              ? <circle r="12" fill="#fff" stroke="#262b4c" strokeWidth="5" />
              : <path d="M-20-20L20 20M20-20L-20 20" stroke="#262b4c" strokeWidth="8" strokeLinecap="round" />}
          </g>
        ))}
      </g>
    </svg>
  );
}

function MapPanel() {
  const ctl = "flex items-center justify-center bg-white text-[#666]";
  return (
    <div className="relative mt-5 h-[642px] overflow-hidden border border-[#bbb] font-[Roboto,sans-serif]">
      <MapDrawing />
      <div className="absolute left-2.5 top-2.5 flex h-10 rounded-sm bg-white text-lg shadow">
        <button className="w-[70px] font-medium text-black">Map</button>
        <button className="w-[98px] border-l border-[#e6e6e6] text-[#565656]">Satellite</button>
      </div>
      <button aria-label="Toggle fullscreen view" className={`${ctl} absolute right-2.5 top-2.5 size-10 rounded-sm shadow`}>
        <svg className="size-[18px]" viewBox="0 0 18 18"><path d="M1 6V1h5M12 1h5v5M17 12v5h-5M6 17H1v-5" fill="none" stroke="currentColor" strokeWidth="2" /></svg>
      </button>
      <div className="absolute bottom-6 right-2.5 flex flex-col gap-8">
        <button aria-label="Drag Pegman onto the map" className={`${ctl} size-10 rounded-sm shadow`}>
          <svg className="h-[30px] w-[18px]" viewBox="0 0 18 30">
            <path d="M5 10Q9 8 13 10L17 20 14 21 13 17V29H5V17L4 21 1 20z" fill="#fbbc2c" stroke="#8a6a3a" strokeWidth="0.6" />
            <path d="M5 10h8L9 15z" fill="#e2762c" />
            <path d="M9 20v9" stroke="#c98b1d" />
            <circle cx="9" cy="5.5" r="5" fill="#fbbc2c" stroke="#8a6a3a" strokeWidth="0.6" />
          </svg>
        </button>
        <div className="w-10 rounded-sm bg-white shadow">
          <button aria-label="Zoom in" className={`${ctl} h-10 w-10`}><svg className="size-[18px]" viewBox="0 0 18 18"><path d="M7 0h4v7h7v4h-7v7H7v-7H0V7h7z" fill="currentColor" /></svg></button>
          <div className="mx-1 h-px bg-[#e6e6e6]" />
          <button aria-label="Zoom out" className={`${ctl} h-10 w-10`}><svg className="size-[18px]" viewBox="0 0 18 18"><path d="M0 7h18v4H0z" fill="currentColor" /></svg></button>
        </div>
      </div>
      <div className="absolute bottom-0 right-0 flex h-3.5 items-center gap-px text-[10px] leading-[14px] text-[#222]">
        <button className="bg-[#f5f5f5]/70 pl-1 pr-1.5">Keyboard shortcuts</button>
        <span className="bg-[#f5f5f5]/70 px-1">Map data ©2025 Google</span>
        <span className="bg-[#f5f5f5]/70 px-1.5"><a href="#terms" className="border-b border-dashed border-[#262b4c]">Terms</a></span>
        <span className="bg-[#f5f5f5]/70 px-1.5"><a href="#report" className="border-b border-dashed border-[#262b4c]">Report a map error</a></span>
      </div>
    </div>
  );
}

function TranslinkLogo() {
  return (
    <a href="#home" className="flex items-center gap-3" aria-label="Translink">
      <svg className="size-11" viewBox="0 0 44 44" aria-hidden="true">
        <g fill="#ef60a1">
          <path d="M9 5C16-1 29-1 37 7C44 15 42 23 36 24C30 24 27 19 25 14C22 6 17 3 9 5z" />
          <path d="M5 8C13 4 19 10 18 18C17 25 8 27 11 41C2 36 0 28 0 22C0 16 2 11 5 8z" />
          <path d="M44 22C44 36 33 45 20 44C12 41 12 31 18 28C25 25 35 34 44 22z" />
        </g>
      </svg>
      <span className="font-[Nunito,Lato,sans-serif] text-[40px] font-bold leading-[44px] text-white">translink</span>
    </a>
  );
}

function Crest() {
  return (
    <svg className="h-[42px] w-11" viewBox="0 0 44 42" fill="none" stroke="#fff" strokeWidth="1" aria-hidden="true">
      <path d="M14 18H30V26Q29 33 22 36Q15 33 14 26z" fill="#fff" />
      <path d="M16 21H28M22 19V34M17 27H27" stroke="#262b4c" />
      <circle cx="19" cy="24" r="1.5" fill="#262b4c" /><circle cx="25" cy="30" r="1.5" fill="#262b4c" />
      <path d="M17 16Q22 13 27 16M18 14Q22 10 26 14M19 9Q22 5 25 9Q22 13 19 9M22 1V6M20 3H24M11 3Q16 5 15 10Q18 12 18 15M33 3Q28 5 29 10Q26 12 26 15M14 1L17 5M30 1L27 5M9 5Q13 7 12 11M35 5Q31 7 32 11" />
      <path d="M4 15Q6 11 10 14L13 20Q12 26 9 28L12 34 9 38 6 38 8 33 4 30Q6 25 5 21L2 20z" fill="#fff" />
      <path d="M2 9L5 14M5 8L7 13M8 9L8 13" />
      <path d="M43 10Q42 19 36 23L38 30 35 38 38 38M43 10Q37 8 36 15L32 17 30 21 34 23 33 29 36 32 32 38H30L32 32 30 27" fill="#fff" />
      <path d="M6 38H38V41H6zM9 40H35" />
    </svg>
  );
}

export default function App() {
  const wrap = "mx-auto w-full max-w-[1140px]";
  return (
    <div className="bg-white font-['Open_Sans','Noto_Sans',sans-serif] text-sm leading-[21px] text-[#222]">
      <div className="relative bg-[#ef60a1]">
        <div className={`${wrap} flex h-[42px] items-center pb-1`}>
          <button className="flex items-center font-bold text-[#262b4c]">
            <svg className="mr-1 h-[18px] w-[26px]" viewBox="0 0 26 18" aria-hidden="true">
              <rect x="1" y="0.5" width="25" height="17" rx="2" fill="#262b4c" />
              <path d="M3 14h6M11 14h13" stroke="#ef60a1" />
              <path d="M17 9V7Q19 4 22 7V10M19 9V7h1v2M17 5Q20 2 22 4" fill="none" stroke="#ef60a1" strokeWidth="0.6" />
            </svg>
            Manage payments
            <Caret className="ml-2 h-1.5 w-[10px]" />
          </button>
        </div>
        <div className="absolute right-[5px] top-[5px] rounded border-2 border-black bg-white px-[5px] py-[5px] text-xs leading-[18px] text-black">16/01/2025, 11:21:16 am</div>
      </div>

      <header className="bg-[#262b4c] text-white">
        <div className={`${wrap} pb-2.5 pt-5`}>
          <div className="flex h-11 items-center justify-between">
            <TranslinkLogo />
            <a href="#qld" className="flex items-center gap-[3px] font-[Lato,sans-serif] text-[17px]">
              <Crest />
              <span><b>Queensland</b> Government</span>
            </a>
          </div>
          <div className="mt-[19px] flex items-center justify-between">
            <nav className="flex items-center gap-[25px] pb-0.5 font-bold">
              <a href="#home" className="mr-[5px]">Home</a>
              {NAV.map((n) => (
                <button key={n} className="flex items-center gap-2">{n}<Caret className="h-1.5 w-2.5" /></button>
              ))}
            </nav>
            <button aria-label="Search" className="flex h-[38px] w-[58px] items-center justify-center gap-1 bg-white text-[#262b4c]">
              <Caret className="h-[5px] w-[9px]" />
              <svg className="size-[18px]" viewBox="0 0 18 18" fill="none" stroke="currentColor" aria-hidden="true"><circle cx="8" cy="8" r="6" strokeWidth="3" /><path d="M12 12.5L16.5 17" strokeWidth="3.5" /></svg>
            </button>
          </div>
        </div>
      </header>

      <main className={`${wrap} pb-[59px] pt-[15px]`}>
        <div role="alert" className="flex items-start justify-between border-2 border-l-8 border-[#e31836] bg-[#f9e5e4] pb-[13px] pl-[18px] pr-4 pt-2.5">
          <div>
            <div className="text-lg leading-[27px]">January extended track closures - impacts all lines</div>
            <p className="mt-1">View our <a href="#notice" className={LINK}>service notice</a> for more information.</p>
          </div>
          <button aria-label="Close" className="mt-1.5 p-1 text-[#666]">
            <svg className="size-2" viewBox="0 0 8 8"><path d="M0.5 0.5l7 7M7.5 0.5l-7 7" stroke="currentColor" strokeWidth="2" /></svg>
          </button>
        </div>

        <nav aria-label="Breadcrumb" className="mt-[21px] flex text-[#262b4c]">
          <a href="#home" className={LINK}>Home</a><span className="pl-4 pr-[13px]">/</span>
          <a href="#updates" className={LINK}>Service updates</a><span className="pl-4 pr-[13px]">/</span>
          <span>Queen Street, Brisbane City - temporary stop closures</span>
        </nav>

        <div className="mt-[17px] flex items-start justify-between">
          <h1 className={`${HEAD} pt-0.5 text-[35px] leading-10`}>Queen Street, Brisbane City - temporary stop closures</h1>
          <button className="mt-px flex h-[33px] w-[72px] items-center justify-center gap-1 rounded-sm border border-[#262b4c] text-[11px] font-bold text-[#262b4c]">
            Print
            <svg className="size-3.5" viewBox="0 0 14 14" fill="none" stroke="currentColor" aria-hidden="true"><path d="M3 6V1h6l2 2v3M3 9.5V13h8V9.5z" /><path d="M0.5 10V7.5q0-1.5 1.5-1.5h10q1.5 0 1.5 1.5V10H11V9H3v1z" fill="currentColor" /></svg>
          </button>
        </div>

        <p className="mt-[27px] text-xs leading-[18px] text-[#666]"><b>Last reviewed:</b> Wednesday 15 Jan 2025 at 4.31pm</p>
        <p className="mt-[15px]">From <b>6:30am until 6:30pm on Saturday 18 January,</b> the following stops will be closed due to construction.</p>
        <p className="mt-4">
          During this time, if you travel on{" "}
          <b>routes {ROUTES.map((r) => <React.Fragment key={r}><a href={`#${r}`} className={LINK}>{r}</a>, </React.Fragment>)}or <a href="#470" className={LINK}>470</a>,</b>{" "}
          please use the alternative stop shown below.
        </p>

        <button className="mt-[15px] flex w-full items-center justify-between border-b border-[#999] py-[15px] pl-[15px] pr-6 text-left font-bold">
          Map legend
          <svg className="mt-1 size-[13px]" viewBox="0 0 13 13" aria-hidden="true"><path d="M6.5 0v13M0 6.5h13" stroke="currentColor" strokeWidth="4" /></svg>
        </button>

        <MapPanel />

        <h2 className={`${HEAD} mt-5 text-[22px] leading-[26px]`}>Affected services</h2>
        <h2 className={`${HEAD} mt-[19px] text-[22px] leading-[26px]`}>Affected stops &amp; stations</h2>
        <h3 className={`${HEAD} mt-4 text-lg leading-[22px]`}>Stop</h3>
        <ul className="mt-2.5">
          {STOPS.map((s) => (
            <li key={s} className="flex">
              <svg className="mr-1 h-[15px] w-4" viewBox="0 0 16 15" aria-hidden="true"><path d="M4 0h8l4 7.5L12 15H4L0 7.5z" fill="#e31836" /><path d="M8 3v5.5M8 10v2" stroke="#fff" strokeWidth="2" /></svg>
              <a href="#stop" className="text-[#262b4c]"><span className={LINK}>{s}</span></a>
            </li>
          ))}
        </ul>

        <h2 className={`${HEAD} mt-[50px] text-2xl leading-[29px]`}>Was this page helpful?</h2>
        <form>
          <div className="mt-[11px] flex">
            {["Yes", "No"].map((v) => (
              <label key={v} className="mr-2.5 flex items-start">
                <input type="radio" name="helpful" className="-mt-px mr-3 size-[19px] appearance-none rounded-full border-2 border-[#666] bg-white" />
                {v}
              </label>
            ))}
          </div>
          <button type="button" className="mt-[29px] h-10 rounded-sm border border-[#262b4c] px-3.5 font-bold text-[#262b4c]">Send feedback</button>
        </form>
      </main>

      <section className="bg-[#ef60a1] pb-[57px] pt-[39px] text-[#262b4c]">
        <div className={wrap}>
          <h2 className={`${HEAD} text-xl leading-6`}>Get in touch</h2>
          <p className="mt-[15px]">We are available to answer your questions and help you with travelling on public transport across Queensland.</p>
          <div className="mt-6 flex font-bold">
            <span>Call us on <a href="#call" className={LINK}>13 12 30</a>, 24 hours a day</span>
            <span className="pl-4 pr-5 font-normal">|</span>
            <a href="#feedback" className={LINK}>Feedback form</a>
            <span className="pl-4 pr-5 font-normal">|</span>
            <a href="#more" className={LINK}>More options</a>
          </div>
        </div>
      </section>

      <footer className="bg-[#262b4c] pb-[33px] pt-[30px] text-white">
        <div className={wrap}>
          <div className="flex items-start">
            <div className="w-3/4">
              <h2 className="font-[Nunito,Lato,sans-serif] text-lg font-bold leading-[22px]">Information in your language</h2>
              <ul className="mt-[9px] flex flex-wrap gap-x-[15px] pr-1.5 font-['Open_Sans','Noto_Sans','Noto_Sans_CJK_SC','Noto_Sans_CJK_KR',sans-serif]">
                {LANGS.map((l) => <li key={l} className={RTL.includes(l) ? "h-[21px] text-xs leading-[21px]" : "h-[21px]"}><a href="#lang">{l}</a></li>)}
              </ul>
            </div>
            <div>
              <h2 className="font-[Nunito,Lato,sans-serif] text-lg font-bold leading-[22px]">Connect with us</h2>
              <div className="mt-2.5 flex gap-7">
                <a href="#fb" aria-label="Facebook"><svg className="size-8" viewBox="0 0 32 32"><path d="M0 1q0-1 1-1h30q1 0 1 1v30q0 1-1 1h-9V20h4l1-5h-5v-3q0-3 3-3h2.5V5H23q-6 0-6 6v4h-4v5h4v12H1q-1 0-1-1z" fill="#fff" /></svg></a>
                <a href="#x" aria-label="X"><svg className="h-8 w-[33px]" viewBox="0 0 33 32" fill="none" stroke="#fff"><path d="M1.5 1H9l22.5 30H24z" strokeWidth="2" /><path d="M31 0L18.5 13.5M14 18L1.5 32" strokeWidth="2.5" /></svg></a>
                <a href="#ig" aria-label="Instagram"><svg className="size-8" viewBox="0 0 32 32" fill="none" stroke="#fff" strokeWidth="3"><rect x="1.5" y="1.5" width="29" height="29" rx="8" /><circle cx="16" cy="16" r="7" /><circle cx="24.5" cy="7.5" r="2" fill="#fff" stroke="none" /></svg></a>
                <a href="#mail" aria-label="Email newsletter"><svg className="h-8 w-[30px]" viewBox="0 0 30 32"><path d="M15 0l14 10v21q0 1-1 1H2q-1 0-1-1V10z" fill="#fff" /><path d="M1 13l13 11h2l13-11M1 31l11-9M29 31l-11-9" fill="none" stroke="#262b4c" strokeWidth="1.5" /><text x="15" y="17" textAnchor="middle" className="fill-[#262b4c] text-[12px] font-bold">@</text></svg></a>
              </div>
            </div>
          </div>
          <ul className="mt-[42px] flex">
            {LEGAL.map((l, i) => (
              <li key={l} className="flex"><a href="#legal">{l}</a>{i < LEGAL.length - 1 && <span className="pl-3 pr-[22px]">|</span>}</li>
            ))}
          </ul>
          <p className="mt-[43px] text-xs leading-[18px]">© State of Queensland 2025 <span className="text-[#8f919c]">v. 6.11.16350</span></p>
        </div>
      </footer>
    </div>
  );
}
